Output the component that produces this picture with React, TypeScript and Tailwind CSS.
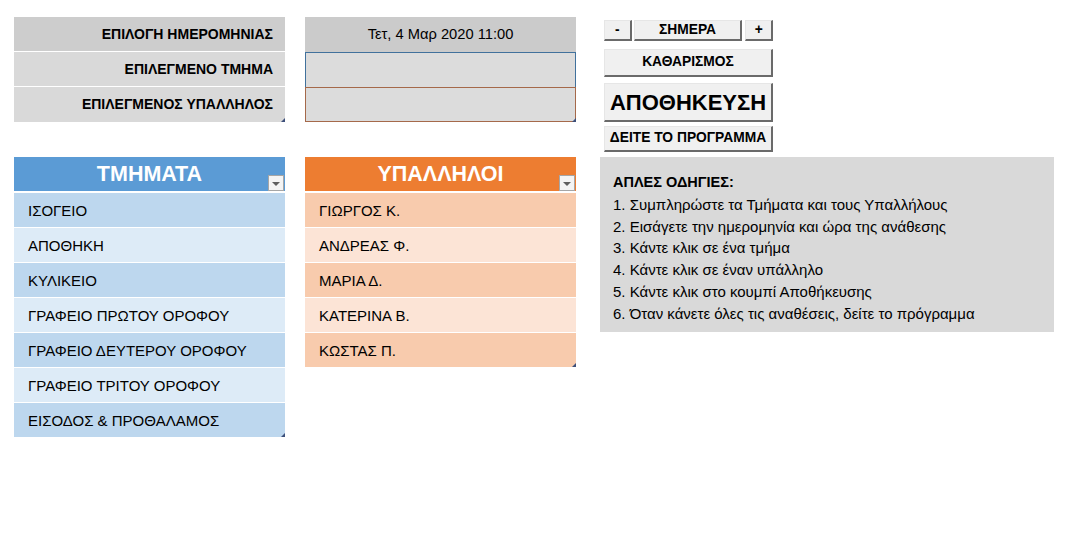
import React from 'react';

const FONT = { fontFamily: '"Liberation Sans", Arial, sans-serif' };

const departments = [
  'ΙΣΟΓΕΙΟ',
  'ΑΠΟΘΗΚΗ',
  'ΚΥΛΙΚΕΙΟ',
  'ΓΡΑΦΕΙΟ ΠΡΩΤΟΥ ΟΡΟΦΟΥ',
  'ΓΡΑΦΕΙΟ ΔΕΥΤΕΡΟΥ ΟΡΟΦΟΥ',
  'ΓΡΑΦΕΙΟ ΤΡΙΤΟΥ ΟΡΟΦΟΥ',
  'ΕΙΣΟΔΟΣ & ΠΡΟΘΑΛΑΜΟΣ',
];

const employees = ['ΓΙΩΡΓΟΣ Κ.', 'ΑΝΔΡΕΑΣ Φ.', 'ΜΑΡΙΑ Δ.', 'ΚΑΤΕΡΙΝΑ Β.', 'ΚΩΣΤΑΣ Π.'];

const instructions = [
  '1. Συμπληρώστε τα Τμήματα και τους Υπαλλήλους',
  '2. Εισάγετε την ημερομηνία και ώρα της ανάθεσης',
  '3. Κάντε κλικ σε ένα τμήμα',
  '4. Κάντε κλικ σε έναν υπάλληλο',
  '5. Κάντε κλικ στο κουμπί Αποθήκευσης',
  '6. Όταν κάνετε όλες τις αναθέσεις, δείτε το πρόγραμμα',
];

function ResizeHandle() {
  return (
    <span className="absolute right-0 bottom-0 h-0 w-0 border-l-[4px] border-l-transparent border-b-[4px] border-b-[#3d4f7a]" />
  );
}

function FilterButton() {
  return (
    <span className="absolute right-[1px] bottom-0 flex h-[16px] w-[16px] items-center justify-center border border-[#a6a6a6] bg-[#f4f4f4]">
      <span className="mt-[2px] h-0 w-0 border-l-[4px] border-r-[4px] border-t-[4px] border-l-transparent border-r-transparent border-t-[#5f5f5f]" />
    </span>
  );
}

function XlButton({ children, className = '' }: { children: React.ReactNode; className?: string }) {
  return (
    <div
      className={`flex items-center justify-center border-t border-l border-t-[#e6e6e6] border-l-[#e6e6e6] border-b-2 border-r-2 border-b-[#6a6a6a] border-r-[#6a6a6a] bg-[#f0f0f0] font-bold text-black ${className}`}
    >
      {children}
    </div>
  );
}

export default function App() {
  return (
    <div className="h-[553px] w-[1067px] bg-white" style={FONT}>
      <div className="flex pl-[14px] pt-[17px]">
        {/* Labels + departments */}
        <div className="flex w-[271px] flex-col">
          <div className="relative flex flex-col gap-[1px] text-[14px] font-bold text-black">
            <div className="flex h-[34px] items-center justify-end bg-[#cdcdcd] pr-[12px]">ΕΠΙΛΟΓΗ ΗΜΕΡΟΜΗΝΙΑΣ</div>
            <div className="flex h-[34px] items-center justify-end bg-[#d9d9d9] pr-[12px]">ΕΠΙΛΕΓΜΕΝΟ ΤΜΗΜΑ</div>
            <div className="flex h-[35px] items-center justify-end bg-[#d9d9d9] pr-[12px]">ΕΠΙΛΕΓΜΕΝΟΣ ΥΠΑΛΛΗΛΟΣ</div>
            <ResizeHandle />
          </div>

          <div className="relative mt-[35px] flex flex-col">
            <div className="relative flex h-[34px] items-center justify-center bg-[#5b9bd5] pt-[1px] text-[21.5px] font-bold text-white">
              ΤΜΗΜΑΤΑ
              <FilterButton />
            </div>
            <div className="h-[2px]" />
            {departments.map((d, i) => (
              <div
                key={d}
                className={`flex h-[34px] items-center pl-[14px] pt-[2px] text-[15px] text-black ${
                  i % 2 === 0 ? 'bg-[#bdd7ee]' : 'bg-[#ddebf7]'
                } ${i > 0 ? 'mt-[1px]' : ''}`}
              >
                {d}
              </div>
            ))}
            <ResizeHandle />
          </div>
        </div>

        {/* Values + employees */}
        <div className="ml-[20px] flex w-[271px] flex-col">
          <div className="relative flex flex-col">
            <div className="flex h-[35px] items-center justify-center bg-[#cbcbcb] text-[14.7px] text-black">
              Τετ, 4 Μαρ 2020 11:00
            </div>
            <div className="h-[35px] border border-b-0 border-[#41719c] bg-[#dcdcdc]" />
            <div className="h-[35px] border border-[#a5694a] bg-[#dcdcdc]" />
            <ResizeHandle />
          </div>

          <div className="relative mt-[35px] flex flex-col">
            <div className="relative flex h-[34px] items-center justify-center bg-[#ed7d31] pt-[1px] text-[21.5px] font-bold text-white">
              ΥΠΑΛΛΗΛΟΙ
              <FilterButton />
            </div>
            <div className="h-[2px]" />
            {employees.map((e, i) => (
              <div
                key={e}
                className={`flex h-[34px] items-center pl-[14px] pt-[2px] text-[15px] text-black ${
                  i % 2 === 0 ? 'bg-[#f8cbad]' : 'bg-[#fce4d6]'
                } ${i > 0 ? 'mt-[1px]' : ''}`}
              >
                {e}
              </div>
            ))}
            <ResizeHandle />
          </div>
        </div>

        {/* Buttons + instructions */}
        <div className="ml-[24px] flex flex-col">
          <div className="ml-[4px] flex w-[169px] flex-col text-[13.8px]">
            <div className="mt-[3px] flex h-[21px] gap-[2px]">
              <XlButton className="w-[28px]">-</XlButton>
              <XlButton className="w-[110px]">ΣΗΜΕΡΑ</XlButton>
              <XlButton className="ml-[1px] w-[28px]">+</XlButton>
            </div>
            <XlButton className="mt-[8px] h-[28px]">ΚΑΘΑΡΙΣΜΟΣ</XlButton>
            <XlButton className="mt-[6px] h-[39px] text-[22px]">ΑΠΟΘΗΚΕΥΣΗ</XlButton>
            <XlButton className="mt-[4px] h-[26px]">ΔΕΙΤΕ ΤΟ ΠΡΟΓΡΑΜΜΑ</XlButton>
          </div>

          <div className="mt-[5px] flex h-[175px] w-[454px] flex-col bg-[#d9d9d9] pl-[13px] pt-[15px] text-[15px] leading-[21.8px] text-black">
            <div className="text-[14.5px] font-bold">ΑΠΛΕΣ ΟΔΗΓΙΕΣ:</div>
            {instructions.map((t) => (
              <div key={t}>{t}</div>
            ))}
          </div>
        </div>
      </div>
    </div>
  );
}
